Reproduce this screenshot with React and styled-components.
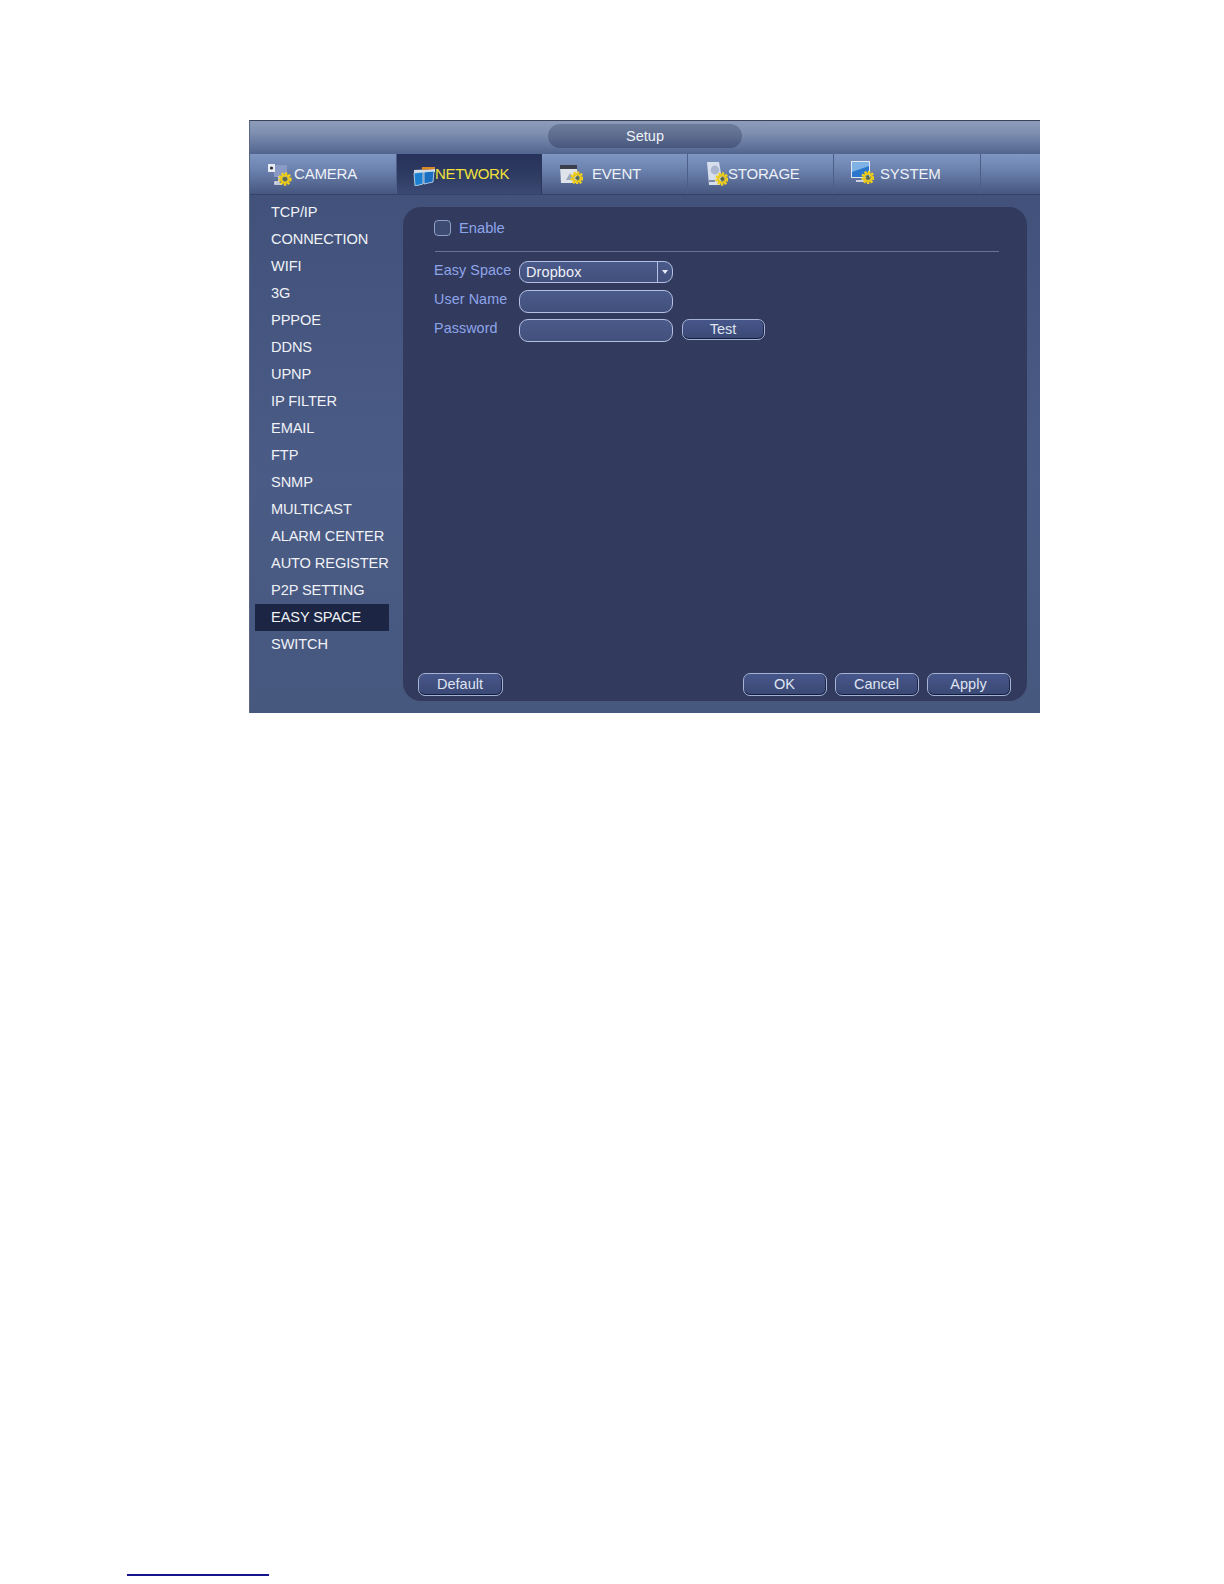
import styled, { createGlobalStyle } from "styled-components";

const Global = createGlobalStyle`
  html, body { margin: 0; padding: 0; background: #fff; }
  body { font-family: "Liberation Sans", Arial, sans-serif; }
`;

const Page = styled.div`
  width: 1224px;
  height: 1584px;
  padding-top: 120px;
  box-sizing: border-box;
  overflow: hidden;
`;

const Frame = styled.div`
  width: 791px;
  height: 593px;
  margin-left: 249px;
  display: flex;
  flex-direction: column;
  background: linear-gradient(180deg, #3f4f78 0%, #4a5b85 60%, #47587f 100%);
  border-top: 1px solid #3a4258;
  border-left: 1px solid #5b6784;
  box-sizing: border-box;
`;

const TitleBar = styled.div`
  height: 33px;
  flex: none;
  display: flex;
  justify-content: center;
  padding-top: 3px;
  box-sizing: border-box;
  background: linear-gradient(180deg, #8d9cba 0%, #7e8fb1 35%, #52658f 100%);
`;

const TitlePill = styled.div`
  width: 194px;
  height: 24px;
  border-radius: 12px;
  display: flex;
  align-items: center;
  justify-content: center;
  color: #eef1f7;
  font-size: 14.5px;
  background: linear-gradient(180deg, #6d7b9b 0%, #5d6c8e 50%, #46567e 100%);
`;

const TabRow = styled.div`
  height: 41px;
  flex: none;
  display: flex;
  background: linear-gradient(180deg, #7f96c3 0%, #6b81ae 40%, #46577f 100%);
  border-bottom: 1px solid #35426a;
  box-sizing: border-box;
`;

const Tab = styled.div`
  width: ${(p) => p.w}px;
  flex: none;
  display: flex;
  align-items: center;
  padding: 0 0 2px ${(p) => p.pad}px;
  gap: ${(p) => p.gap}px;
  box-sizing: border-box;
  font-size: 15px;
  letter-spacing: ${(p) => (p.active ? "-0.35px" : "-0.2px")};
  color: ${(p) => (p.active ? "#f2e23a" : "#eef1f7")};
  border-right: 1px solid ${(p) => (p.active ? "#2c3657" : "#4d5e88")};
  background: ${(p) =>
    p.active ? "linear-gradient(180deg, #27325a 0%, #2d3a61 50%, #3b4a73 100%)" : "none"};
`;

const Body = styled.div`
  flex: 1;
  display: flex;
  padding-left: 5px;
  min-height: 0;
`;

const Side = styled.div`
  width: 134px;
  flex: none;
  margin-right: 14px;
  padding-top: 3.5px;
  display: flex;
  flex-direction: column;
`;

const SideItem = styled.div`
  height: 27px;
  flex: none;
  display: flex;
  align-items: center;
  padding-left: 16px;
  font-size: 14.6px;
  letter-spacing: -0.1px;
  white-space: nowrap;
  color: #f0f2f7;
  background: ${(p) => (p.active ? "#1c2644" : "none")};
`;

const Panel = styled.div`
  flex: 1;
  display: flex;
  flex-direction: column;
  margin: 12px 13px 12px 0;
  border-radius: 18px;
  background: #323b5e;
  padding: 13px 16px 0 15px;
`;

const EnableRow = styled.label`
  display: flex;
  align-items: center;
  height: 16px;
  gap: 8px;
  margin-left: 16px;
  color: #8fa5ea;
  font-size: 14.7px;
`;

const Check = styled.span`
  width: 17px;
  height: 16px;
  box-sizing: border-box;
  border: 1px solid #90a0c8;
  border-radius: 4px;
  background: #3d4a72;
`;

const Rule = styled.div`
  height: 1px;
  margin: 15px 12px 0 17px;
  background: #6a7596;
`;

const Fields = styled.div`
  display: grid;
  grid-template-columns: 85px 154px auto;
  grid-auto-rows: 29px;
  align-items: center;
  justify-items: start;
  margin: 6px 0 0 16px;
`;

const Label = styled.div`
  margin-bottom: 5px;
  color: #8fa5ea;
  font-size: 14.3px;
  letter-spacing: 0.1px;
`;

const Input = styled.div`
  width: 154px;
  height: ${(p) => (p.select ? 22 : 23)}px;
  margin-bottom: ${(p) => (p.select ? 2 : 0)}px;
  box-sizing: border-box;
  border: 1px solid #b3c0e2;
  border-radius: 9px;
  background: linear-gradient(180deg, #4a5a8a 0%, #42507c 100%);
  display: flex;
  align-items: center;
  color: #eef1f7;
  font-size: 14.5px;
  overflow: hidden;
`;

const SelectValue = styled.span`
  flex: 1;
  padding-left: 6px;
  letter-spacing: 0.1px;
`;

const Arrow = styled.span`
  width: 14px;
  height: 100%;
  border-left: 1px solid #b3c0e2;
  display: flex;
  align-items: center;
  justify-content: center;
  &::after {
    content: "";
    border: 3.5px solid transparent;
    border-top: 4px solid #e6eaf4;
    border-bottom: 0;
  }
`;

const Btn = styled.button`
  width: 84px;
  height: 23px;
  padding: 0 1px 1px 0;
  box-sizing: border-box;
  border: 1px solid #a4b2d6;
  border-radius: 7px;
  box-shadow: inset 0 -1px 0 #141c3c, inset -1px 0 0 #1f2849;
  font-family: inherit;
  font-size: 14.5px;
  color: #dfe4f0;
  background: linear-gradient(180deg, #47568a 0%, #3a4874 100%);
`;

const TestBtn = styled(Btn)`
  width: 83px;
  height: 21px;
  margin: 0 0 2px 9px;
`;

const Actions = styled.div`
  margin-top: auto;
  margin-bottom: 5px;
  display: flex;
  gap: 8px;
`;

const DefaultBtn = styled(Btn)`
  width: 85px;
  margin-right: auto;
`;

const FootRule = styled.div`
  width: 142px;
  height: 2px;
  margin: 861px 0 0 127px;
  background: #14148c;
`;

const Gear = ({ x, y }) => (
  <g transform={`translate(${x} ${y})`}>
    <circle r="5.2" fill="none" stroke="#f2d21e" strokeWidth="3" strokeDasharray="2.2 1.2" />
    <circle r="3.8" fill="none" stroke="#e8c81a" strokeWidth="2.4" />
    <circle r="1.8" fill="#5a6a3a" />
  </g>
);

const Icon = styled.svg`
  flex: none;
  display: block;
  margin-top: ${(p) => p.drop}px;
`;

const CameraIcon = () => (
  <Icon width="24" height="22" viewBox="0 0 24 22" drop={4}>
    <path d="M6 1h13v12H6z" fill="#8a9ac4" />
    <rect x="0" y="0" width="7" height="8" fill="#e8ecf2" />
    <circle cx="3.5" cy="4" r="1.6" fill="#2a2f3c" />
    <path d="M11 12v6H7v2h7" stroke="#e4e8f0" strokeWidth="1.4" fill="none" />
    <Gear x={17} y={15} />
  </Icon>
);

const NetworkIcon = () => (
  <Icon width="22" height="20" viewBox="0 0 22 20" drop={6}>
    <path d="M1 4l21-1v3L1 7z" fill="#d8dde4" />
    <path d="M9 1h13v2L9 4z" fill="#d98a28" />
    <path d="M1 7l9-1v12l-8 2z" fill="#1d7fd0" stroke="#cfe4f4" strokeWidth="0.8" />
    <path d="M11 6l10-1-1 11-9 2z" fill="#1a6fc2" stroke="#cfe4f4" strokeWidth="0.8" />
  </Icon>
);

const EventIcon = () => (
  <Icon width="23" height="19" viewBox="0 0 23 19" drop={2}>
    <path d="M0 0h17v18H1z" fill="#dfe3ea" />
    <path d="M0 0h17v4H0z" fill="#3b3f4a" />
    <path d="M6 15l4-7 3 7z" fill="#9aa6c0" />
    <Gear x={17} y={13} />
  </Icon>
);

const StorageIcon = () => (
  <Icon width="21" height="24" viewBox="0 0 21 24" drop={1}>
    <path d="M0 0h12l3 17-2 6H2z" fill="#d8dfec" />
    <circle cx="8" cy="8" r="4.4" fill="#aab5cf" />
    <rect x="2" y="18" width="6" height="2" fill="#7e8aa8" />
    <Gear x={15} y={17} />
  </Icon>
);

const SystemIcon = () => (
  <Icon width="23" height="23" viewBox="0 0 23 23" drop={-1}>
    <rect x="0" y="0" width="19" height="17" fill="#e2e8f2" />
    <path d="M1 1h17v15H1z" fill="#2a76cc" />
    <path d="M1 1h17v4L1 11z" fill="#7fb2e4" />
    <path d="M5 20h10" stroke="#e6eaf2" strokeWidth="1.6" />
    <Gear x={17} y={16.5} />
  </Icon>
);

const tabs = [
  { label: "CAMERA", w: 147, pad: 18, gap: 2, icon: <CameraIcon /> },
  { label: "NETWORK", w: 145, pad: 16, gap: 0, icon: <NetworkIcon />, active: true },
  { label: "EVENT", w: 146, pad: 18, gap: 9, icon: <EventIcon /> },
  { label: "STORAGE", w: 146, pad: 19, gap: 0, icon: <StorageIcon /> },
  { label: "SYSTEM", w: 147, pad: 17, gap: 6, icon: <SystemIcon /> },
];

const menu = [
  "TCP/IP", "CONNECTION", "WIFI", "3G", "PPPOE", "DDNS", "UPNP", "IP FILTER", "EMAIL",
  "FTP", "SNMP", "MULTICAST", "ALARM CENTER", "AUTO REGISTER", "P2P SETTING", "EASY SPACE", "SWITCH",
];

export default function App() {
  return (
    <>
      <Global />
      <Page>
        <Frame>
          <TitleBar>
            <TitlePill>Setup</TitlePill>
          </TitleBar>
          <TabRow>
            {tabs.map((t) => (
              <Tab key={t.label} w={t.w} pad={t.pad} gap={t.gap} active={t.active}>
                {t.icon}
                {t.label}
              </Tab>
            ))}
          </TabRow>
          <Body>
            <Side>
              {menu.map((m) => (
                <SideItem key={m} active={m === "EASY SPACE"}>{m}</SideItem>
              ))}
            </Side>
            <Panel>
              <EnableRow>
                <Check />
                Enable
              </EnableRow>
              <Rule />
              <Fields>
                <Label>Easy Space</Label>
                <Input select>
                  <SelectValue>Dropbox</SelectValue>
                  <Arrow />
                </Input>
                <span />
                <Label>User Name</Label>
                <Input />
                <span />
                <Label>Password</Label>
                <Input />
                <TestBtn>Test</TestBtn>
              </Fields>
              <Actions>
                <DefaultBtn>Default</DefaultBtn>
                <Btn>OK</Btn>
                <Btn>Cancel</Btn>
                <Btn>Apply</Btn>
              </Actions>
            </Panel>
          </Body>
        </Frame>
        <FootRule />
      </Page>
    </>
  );
}
